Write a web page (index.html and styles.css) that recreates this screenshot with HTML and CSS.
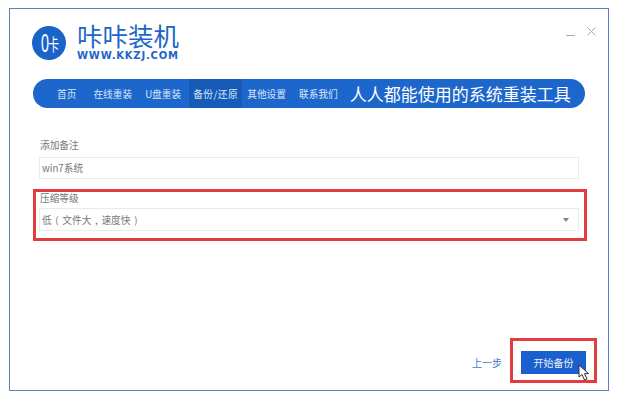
FILE: index.html
```html
<!DOCTYPE html>
<html lang="zh">
<head>
    <meta charset="UTF-8">
    <title>咔咔装机</title>
    <link rel="stylesheet" href="styles.css">
</head>
<body>

<div class="window">
    <div class="top">
        <div class="logo">
            <div class="logo-mark">
                <span class="logo-zero">0</span><span class="logo-ka">卡</span>
            </div>
            <div class="logo-text">
                <div class="logo-name">咔咔装机</div>
                <div class="logo-url">WWW.KKZJ.COM</div>
            </div>
        </div>
        <div class="controls">
            <span class="min"></span>
            <svg class="close" width="9" height="9" viewBox="0 0 9 9">
                <path d="M0.5 0.5L8.5 8.5M8.5 0.5L0.5 8.5" stroke="#a9adb3" stroke-width="1" fill="none"/>
            </svg>
        </div>
    </div>

    <div class="nav">
        <a class="nav-item home">首页</a>
        <a class="nav-item online">在线重装</a>
        <a class="nav-item usb">U盘重装</a>
        <a class="nav-item active">备份/还原</a>
        <a class="nav-item other">其他设置</a>
        <a class="nav-item">联系我们</a>
        <span class="slogan">人人都能使用的系统重装工具</span>
    </div>

    <div class="form">
        <label class="field-label">添加备注</label>
        <div class="field">win7系统</div>
        <label class="field-label second">压缩等级</label>
        <div class="field select">
            <span class="select-text">低 ( 文件大 , 速度快 )</span>
            <span class="arrow"></span>
        </div>
    </div>

    <div class="footer">
        <a class="prev">上一步</a>
        <button class="start">开始备份</button>
    </div>

    <div class="mark mark-select"></div>
    <div class="mark mark-button"></div>
    <svg class="cursor" width="13" height="17" viewBox="0 0 13 17">
        <path d="M1 1L1 13L4 10.5L6.5 16L9 15L6.5 9.8L10.5 9.5Z" fill="#fff" stroke="#333" stroke-width="1"/>
    </svg>
</div>

</body>
</html>
```
FILE: styles.css
```css
html, body { margin: 0; padding: 0; background: #fff; }
body { font-family: "Noto Sans CJK SC", "Liberation Sans", sans-serif; }

.window { position: relative; box-sizing: border-box; width: 600px; height: 383px; margin: 8px 0 0 9px; border: 1px solid #5f7fc0; background: #fff; }

.top { display: flex; justify-content: space-between; padding: 15px 12px 0 22px; height: 55px; box-sizing: border-box; }
.logo { display: flex; align-items: flex-start; gap: 11px; }
.logo-mark { display: flex; align-items: center; justify-content: center; width: 34px; height: 34px; margin-top: 2px; border-radius: 50%; background: #1a63c8; color: #fff; }
.logo-zero { width: 9px; font: 26px/1 "Liberation Sans", sans-serif; transform: scaleX(0.55); text-align: center; }
.logo-ka { font-size: 11px; line-height: 1; transform: scaleY(1.6); }
.logo-text { color: #1c66c9; width: 104px; }
.logo-name { font-size: 25.5px; line-height: 25px; white-space: nowrap; margin-top: -2px; }
.logo-url { font: bold 10px/11px "DejaVu Sans", sans-serif; letter-spacing: 0.8px; white-space: nowrap; margin-top: 3px; }

.controls { display: flex; gap: 12px; align-items: flex-start; padding-top: 3px; }
.min { width: 9px; height: 1px; margin-top: 8px; background: #a9adb3; }

.nav { display: flex; align-items: center; height: 29px; margin: 15px 23px 0 23px; border-radius: 15px; background: #1c66cc; color: #dbe7f8; font-size: 9.7px; white-space: nowrap; }
.nav-item { display: flex; align-items: center; height: 29px; }
.nav-item.home { margin-left: 24px; margin-right: 17px; }
.nav-item.online { margin-right: 13px; }
.nav-item.usb { margin-right: 8px; }
.nav-item.active { padding: 0 4px; letter-spacing: 0.5px; background: #175bb8; margin-right: 5px; }
.nav-item.other { margin-right: 13px; }
.slogan { margin-left: 12px; color: #fff; font-size: 17px; }

.form { padding: 30px 29px 0 29px; color: #777; font-size: 9.7px; }
.field-label { display: block; line-height: 14px; margin-left: 1px; }
.field-label.second { margin-top: 12px; }
.field { display: flex; justify-content: space-between; align-items: center; box-sizing: border-box; height: 22px; margin-top: 5px; padding: 0 7px 0 2px; border: 1px solid #e8eaed; }
.field.select { height: 23px; margin-top: 3px; }
.select-text { word-spacing: 1.5px; }
.arrow { width: 0; height: 0; border-left: 3px solid transparent; border-right: 3px solid transparent; border-top: 4px solid #808488; margin-right: 2px; }

.footer { position: absolute; right: 22px; bottom: 16px; display: flex; align-items: center; gap: 19px; }
.prev { color: #3f78c8; font-size: 10px; }
.start { width: 65px; height: 23px; padding: 0; border: none; background: #1a5fcb; color: #e8f0fb; font-family: inherit; font-size: 10px; }

.mark { position: absolute; box-sizing: border-box; border: 3px solid #e23b40; }
.mark-select { left: 23px; top: 180px; width: 554px; height: 52px; }
.mark-button { left: 500px; top: 329px; width: 87px; height: 45px; }
.cursor { position: absolute; left: 568px; top: 355px; }
```
